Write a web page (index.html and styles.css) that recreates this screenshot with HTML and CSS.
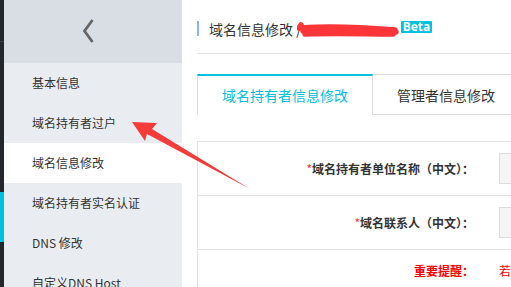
FILE: index.html
```html
<!DOCTYPE html>
<html lang="zh-CN">
<head>
<meta charset="utf-8">
<title>域名信息修改</title>
<link rel="stylesheet" href="styles.css">
</head>
<body>
<div class="page">
  <div class="rail">
    <div class="rail-top"></div>
    <div class="rail-mark"></div>
  </div>
  <aside class="sidebar">
    <div class="side-head">
      <svg class="chev" width="14" height="26" viewBox="0 0 14 26"><path d="M11.5 2 L3.5 13 L11.5 24" fill="none" stroke="#666" stroke-width="2.8"/></svg>
    </div>
    <ul class="menu">
      <li class="item">基本信息</li>
      <li class="item">域名持有者过户</li>
      <li class="item active">域名信息修改</li>
      <li class="item">域名持有者实名认证</li>
      <li class="item">DNS 修改</li>
      <li class="item">自定义DNS Host</li>
    </ul>
  </aside>
  <main class="main">
    <div class="head">
      <span class="head-bar"></span>
      <span class="head-title">域名信息修改 /</span>
      <svg class="scribble" width="104" height="16" viewBox="0 0 104 16"><path d="M2 6 L4 3 M6 6 C30 4 60 5 98 8 M6 9 C35 7 70 8 99 10 M8 12 C40 11 70 12 96 12" fill="none" stroke="#fb3538" stroke-width="5.5" stroke-linecap="round"/></svg>
      <span class="beta">Beta</span>
    </div>
    <div class="tabs">
      <div class="tab tab-active">域名持有者信息修改</div>
      <div class="tab tab-other">管理者信息修改</div>
    </div>
    <div class="form">
      <div class="row">
        <div class="label"><span class="req">*</span>域名持有者单位名称（中文）：</div>
        <div class="input"></div>
      </div>
      <div class="row">
        <div class="label"><span class="req">*</span>域名联系人（中文）：</div>
        <div class="input"></div>
      </div>
      <div class="row row-last">
        <div class="label warn">重要提醒：</div>
        <div class="warn-text">若</div>
      </div>
    </div>
  </main>
  <svg class="arrow" width="511" height="287" viewBox="0 0 511 287"><polygon points="132,122 157,123 152,129 250,189 147,134 145,141" fill="#f63b3b"/></svg>
</div>
</body>
</html>
```

FILE: styles.css
```css
* { box-sizing: border-box; }
html, body { margin: 0; padding: 0; }
body {
  width: 511px;
  height: 287px;
  overflow: hidden;
  background: #fff;
  font-family: "Noto Sans CJK SC", "Noto Sans", sans-serif;
  color: #333;
}
.page {
  position: relative;
  display: flex;
  height: 287px;
}
.rail {
  width: 4px;
  flex: none;
  background: #22272b;
  display: flex;
  flex-direction: column;
}
.rail-top {
  height: 42px;
  border-bottom: 1px solid #3a4045;
}
.rail-mark {
  margin-top: 150px;
  height: 50px;
  background: #00c1de;
}
.sidebar {
  width: 178px;
  flex: none;
  background: #e9edf2;
}
.side-head {
  height: 63px;
  background: #d9dee4;
  display: flex;
  align-items: center;
  justify-content: center;
  padding-right: 10px;
  padding-bottom: 2px;
}
.chev { display: block; }
.menu {
  list-style: none;
  margin: 0;
  padding: 0;
}
.item {
  height: 40px;
  line-height: 40px;
  padding-left: 28px;
  font-size: 12px;
  color: #333;
  white-space: nowrap;
}
.item.active { background: #fff; }
.main {
  flex: 1;
  min-width: 0;
  padding-left: 15px;
  overflow: hidden;
}
.head {
  height: 54px;
  border-bottom: 1px solid #e6e6e6;
  display: flex;
  align-items: center;
  padding-top: 4px;
  white-space: nowrap;
}
.head-bar {
  width: 2px;
  height: 15px;
  background: #88b7e0;
  margin-right: 10px;
}
.head-title {
  font-size: 14px;
  line-height: 20px;
  color: #333;
}
.scribble {
  flex: none;
  margin-left: -5px;
  margin-top: 3px;
}
.beta {
  flex: none;
  margin-left: 0;
  margin-top: -3px;
  background: #00c1de;
  color: #fff;
  font-family: "Open Sans", "Noto Sans", sans-serif;
  font-weight: 700;
  font-size: 12px;
  line-height: 12px;
  padding: 0 2px;
  border-radius: 1px;
}
.tabs {
  display: flex;
  margin-top: 20px;
  height: 41px;
  white-space: nowrap;
}
.tab {
  font-size: 14px;
  display: flex;
  align-items: center;
}
.tab-active {
  width: 176px;
  flex: none;
  border-top: 2px solid #00c1de;
  border-left: 1px solid #ddd;
  border-right: 1px solid #ddd;
  color: #00c1de;
  justify-content: center;
  padding-bottom: 1px;
}
.tab-other {
  flex: 1;
  border-top: 1px solid #ddd;
  border-bottom: 1px solid #ddd;
  padding-left: 24px;
  color: #333;
}
.form {
  margin-top: 26px;
  border: 1px solid #e3e3e3;
  border-right: none;
}
.row {
  display: flex;
  align-items: center;
  height: 54px;
  border-bottom: 1px solid #e3e3e3;
}
.row-last {
  border-bottom: none;
  align-items: flex-start;
  padding-top: 12px;
}
.label {
  width: 301px;
  flex: none;
  text-align: right;
  font-size: 12px;
  font-weight: 700;
  color: #333;
  white-space: nowrap;
  padding-right: 25px;
}
.req { color: #f33; font-weight: 400; }
.input {
  width: 60px;
  height: 31px;
  flex: none;
  background: #f5f5f5;
  border: 1px solid #ddd;
}
.warn { color: #f00; }
.warn-text {
  color: #f00;
  font-size: 12px;
}
.arrow {
  position: absolute;
  left: 0;
  top: 0;
  pointer-events: none;
}
```
